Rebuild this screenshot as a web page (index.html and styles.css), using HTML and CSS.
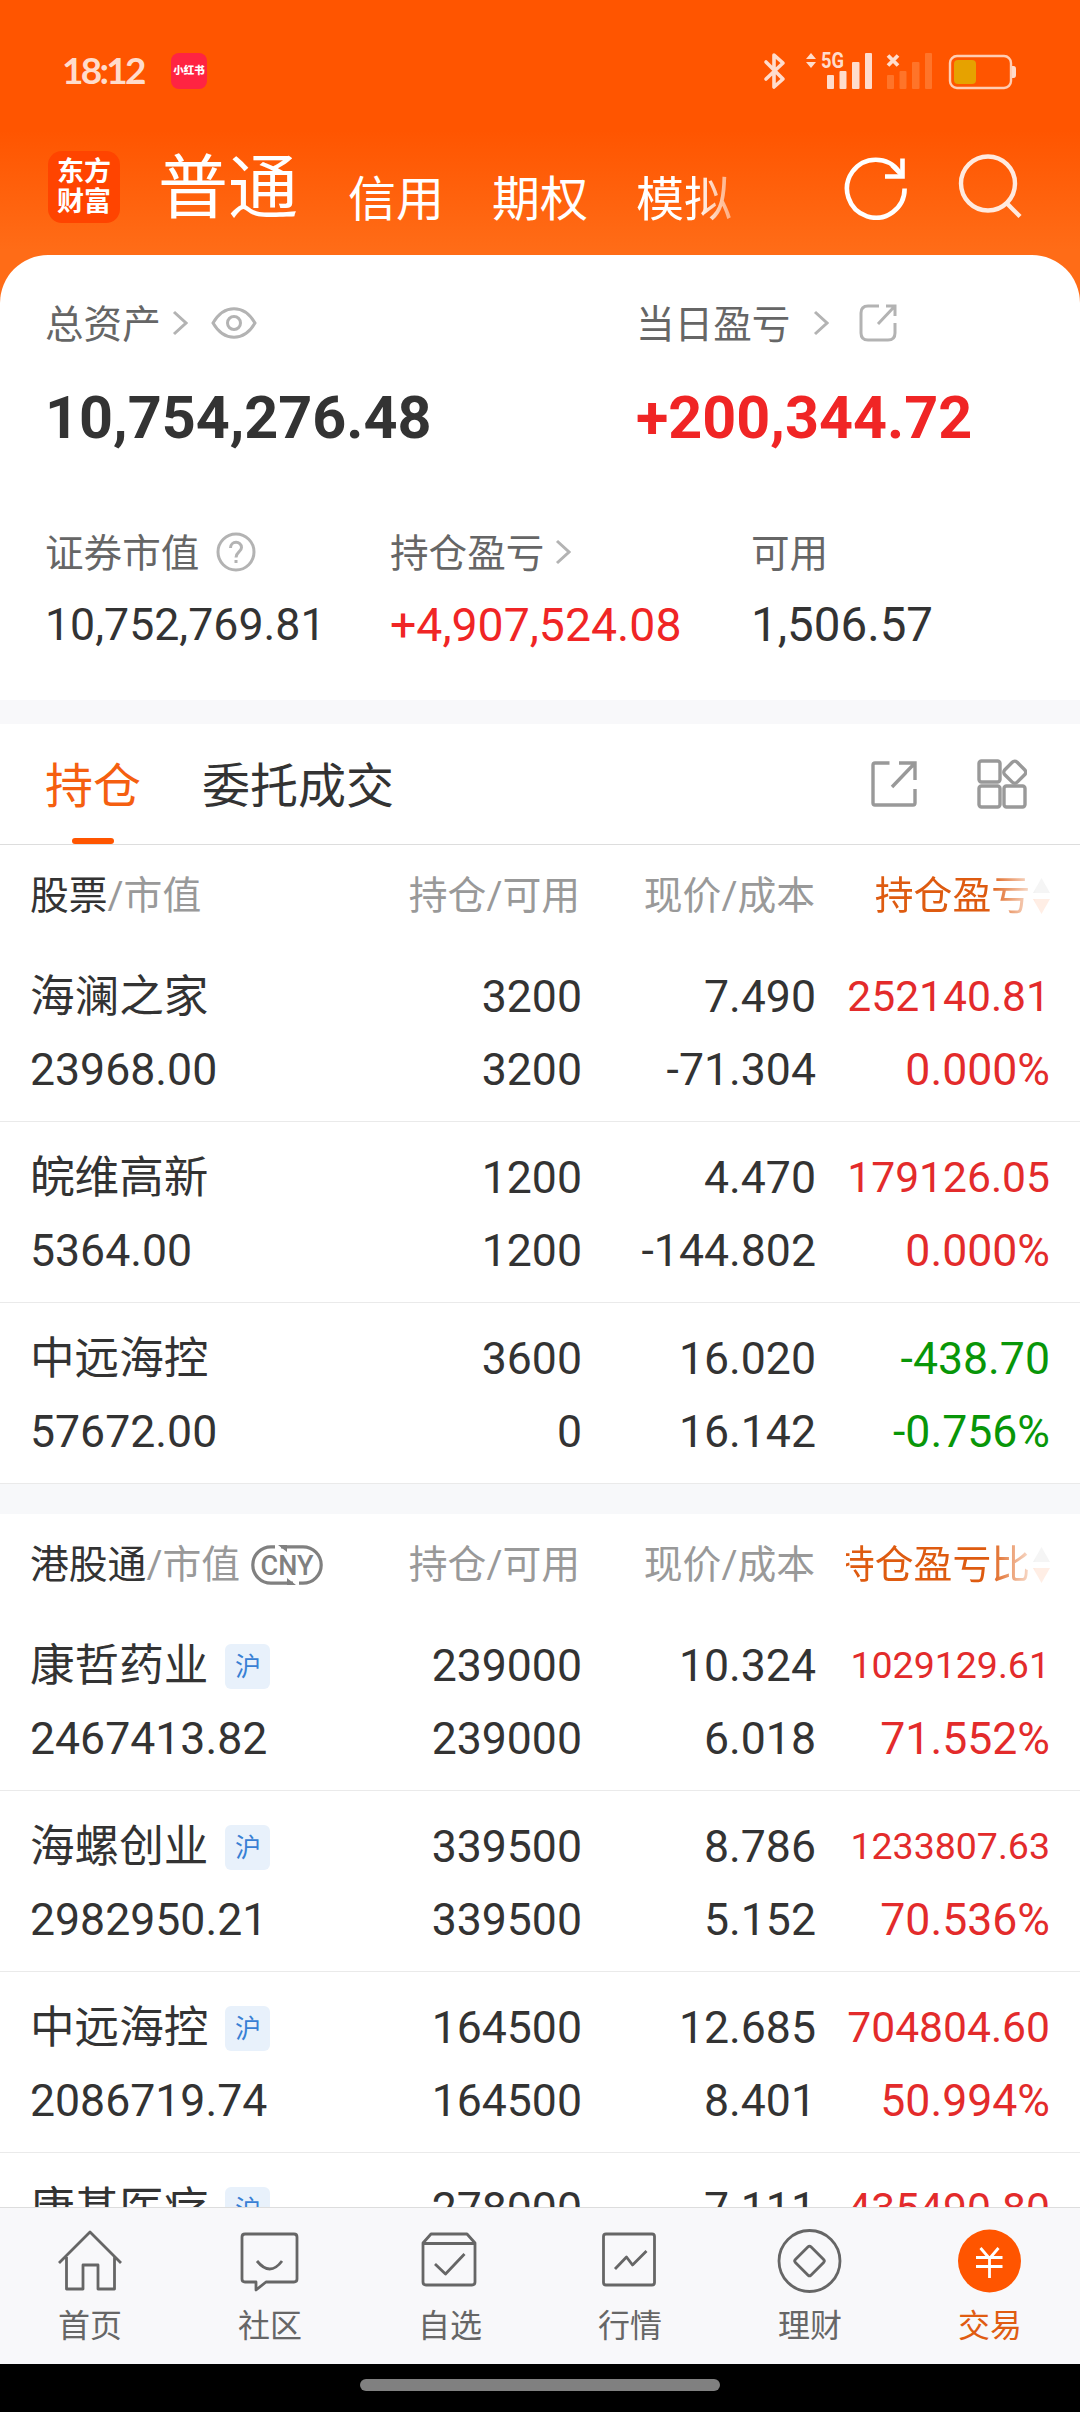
FILE: index.html
```html
<!DOCTYPE html>
<html lang="zh-CN">
<head>
    <meta charset="UTF-8">
    <meta name="viewport" content="width=device-width, initial-scale=1.0">
    <title>交易</title>
    <link rel="stylesheet" href="styles.css">
</head>
<body>
    <div class="top">
        <div class="status-bar">
            <span class="time">18:12</span>
            <span class="app-badge">小红书</span>
            <svg class="status-icons" width="256" height="44" viewBox="762 48 256 44">
                <path d="M766 61l17 17-9 8V54l9 8-17 16" fill="none" stroke="#ffdccc" stroke-width="3.6" stroke-linecap="round" stroke-linejoin="round"/>
                <path d="M806 58l5-6 5 6zM806 61l5 6 5-6z" fill="#ffdccc"/>
                <text x="821" y="67" class="net" textLength="23" lengthAdjust="spacingAndGlyphs">5G</text>
                <g fill="#ffdccc">
                    <rect x="827" y="74" width="7" height="14" rx="1"/>
                    <rect x="839.5" y="70" width="7" height="18" rx="1"/>
                    <rect x="852" y="61" width="7.500" height="27" rx="1"/>
                    <rect x="865" y="52" width="7" height="36" rx="1"/>
                </g>
                <path d="M888 54.500l10 10m0-10l-10 10" stroke="#ffdccc" stroke-width="3.800"/>
                <g fill="#ff7429">
                    <rect x="887" y="74" width="7" height="14" rx="1"/>
                    <rect x="899.5" y="70" width="7" height="18" rx="1"/>
                    <rect x="912" y="61" width="7.500" height="27" rx="1"/>
                    <rect x="925" y="52" width="7" height="36" rx="1"/>
                </g>
                <rect x="950" y="55" width="61" height="32" rx="7" fill="none" stroke="#ffcdb3" stroke-width="2.400"/>
                <rect x="954" y="59" width="22" height="24" rx="4" fill="#e6a200"/>
                <path d="M1012 65h1.500q2.500 0 2.500 3v6q0 3-2.500 3h-1.500z" fill="#ffdccc"/>
            </svg>
        </div>

        <div class="title-bar">
            <div class="logo">东方<br>财富</div>
            <div class="account-tabs">
                <span class="account active">普通</span>
                <span class="account">信用</span>
                <span class="account">期权</span>
                <span class="account faded">模拟</span>
            </div>
            <svg class="refresh" width="66" height="66" viewBox="0 0 66 66" fill="none" stroke="#fff" stroke-width="4.6">
                <path d="M61.600 34.500A28.800 29 0 1 1 56 17.500"/>
                <path d="M59.500 4.500V22.500H42"/>
                <path d="M49 11l10 10"/>
            </svg>
            <svg class="search" width="66" height="66" viewBox="0 0 66 66" fill="none" stroke="#ffeadf" stroke-width="4.400">
                <circle cx="31" cy="29.500" r="27"/>
                <path d="M49.500 49L63 62.500"/>
            </svg>
        </div>

        <div class="assets">
            <div class="asset-main">
                <div>
                    <div class="label">总资产
                        <svg class="chev" width="16" height="26" viewBox="0 0 16 26"><path d="M2 2l12 11L2 24"/></svg>
                        <svg class="eye" width="46" height="34" viewBox="0 0 46 34"><path d="M2 17C13-2 33-2 44 17 33 36 13 36 2 17z"/><circle cx="23" cy="17" r="6.500"/></svg>
                    </div>
                    <div class="big">10,754,276.48</div>
                </div>
                <div>
                    <div class="label">当日盈亏
                        <svg class="chev far" width="16" height="26" viewBox="0 0 16 26"><path d="M2 2l12 11L2 24"/></svg>
                        <svg class="share" width="38" height="38" viewBox="0 0 38 38"><path d="M20 2H9Q2 2 2 9V29Q2 36 9 36H29Q36 36 36 29V19M27 2H36V12M35 3L19 20"/></svg>
                    </div>
                    <div class="big red">+200,344.72</div>
                </div>
            </div>
            <div class="asset-sub">
                <div>
                    <div class="label">证券市值
                        <svg class="help" width="40" height="40" viewBox="0 0 40 40"><circle cx="20" cy="20" r="18"/><path d="M14.500 16C14.500 8.500 25.500 8.500 25.500 15.500C25.500 20 20 20 20 25.500M20 28v3"/></svg>
                    </div>
                    <div class="value small">10,752,769.81</div>
                </div>
                <div>
                    <div class="label">持仓盈亏
                        <svg class="chev near" width="16" height="26" viewBox="0 0 16 26"><path d="M2 2l12 11L2 24"/></svg>
                    </div>
                    <div class="value medium red">+4,907,524.08</div>
                </div>
                <div>
                    <div class="label">可用</div>
                    <div class="value">1,506.57</div>
                </div>
            </div>
        </div>
    </div>

    <div class="holdings">
        <div class="tabs">
            <div class="tab active">持仓</div>
            <div class="tab">委托成交</div>
            <svg class="tab-share" width="46" height="46" viewBox="0 0 46 46"><path d="M18.500 2H4Q2 2 2 4V42Q2 44 4 44H42Q44 44 44 42V28M28 2H44V19M43 3L21 26"/></svg>
            <svg class="tab-grid" width="50" height="50" viewBox="0 0 50 50"><rect x="2" y="2" width="21" height="21" rx="2.500"/><rect x="2" y="27" width="21" height="21" rx="2.500"/><rect x="27" y="27" width="21" height="21" rx="2.500"/><rect x="29" y="4.500" width="17.500" height="17.500" rx="3.500" transform="rotate(45 37.800 13.200)"/></svg>
        </div>

        <div class="table-head">
            <div class="name"><span class="dark">股票</span>/市值</div>
            <div>持仓/可用</div>
            <div>现价/成本</div>
            <div class="sort"><span>持仓盈亏</span><svg width="17" height="36" viewBox="0 0 17 36"><path d="M0 15L8.500 0 17 15z" fill="#999"/><path d="M0 21L8.500 36 17 21z" fill="#f50"/></svg></div>
        </div>
        <div class="row">
            <div class="name">海澜之家<br>23968.00</div>
            <div>3200<br>3200</div>
            <div>7.490<br>-71.304</div>
            <div class="up"><span class="fit">252140.81</span><br>0.000%</div>
        </div>
        <div class="row">
            <div class="name">皖维高新<br>5364.00</div>
            <div>1200<br>1200</div>
            <div>4.470<br>-144.802</div>
            <div class="up"><span class="fit">179126.05</span><br>0.000%</div>
        </div>
        <div class="row">
            <div class="name">中远海控<br>57672.00</div>
            <div>3600<br>0</div>
            <div>16.020<br>16.142</div>
            <div class="down">-438.70<br>-0.756%</div>
        </div>

        <div class="gap"></div>

        <div class="table-head">
            <div class="name"><span class="dark">港股通</span>/市值
                <svg class="cny" width="72" height="40" viewBox="0 0 72 40"><path d="M24 1.800H20A18 18 0 0 0 20 38.200H42M48 38.200H52A18 18 0 0 0 52 1.800H30"/><path class="tip" d="M27 0h9v7zM45 40h-9v-7z"/><text x="36" y="30" text-anchor="middle">CNY</text></svg>
            </div>
            <div>持仓/可用</div>
            <div>现价/成本</div>
            <div class="sort"><span>持仓盈亏比</span><svg width="17" height="36" viewBox="0 0 17 36"><path d="M0 15L8.500 0 17 15z" fill="#999"/><path d="M0 21L8.500 36 17 21z" fill="#f50"/></svg></div>
        </div>
        <div class="row">
            <div class="name">康哲药业<span class="market">沪</span><br>2467413.82</div>
            <div>239000<br>239000</div>
            <div>10.324<br>6.018</div>
            <div class="up"><span class="fit long">1029129.61</span><br>71.552%</div>
        </div>
        <div class="row">
            <div class="name">海螺创业<span class="market">沪</span><br>2982950.21</div>
            <div>339500<br>339500</div>
            <div>8.786<br>5.152</div>
            <div class="up"><span class="fit long">1233807.63</span><br>70.536%</div>
        </div>
        <div class="row">
            <div class="name">中远海控<span class="market">沪</span><br>2086719.74</div>
            <div>164500<br>164500</div>
            <div>12.685<br>8.401</div>
            <div class="up"><span class="fit">704804.60</span><br>50.994%</div>
        </div>
        <div class="row">
            <div class="name">康基医疗<span class="market">沪</span></div>
            <div>278000</div>
            <div>7.111</div>
            <div class="up"><span class="fit">435490.80</span></div>
        </div>
    </div>

    <div class="nav">
        <div class="nav-item">
            <svg width="66" height="66" viewBox="0 0 66 66"><path d="M2 36L33 5 64 36M9.500 30V62H26V38H41V62H57.500V30"/></svg>
            <span>首页</span>
        </div>
        <div class="nav-item">
            <svg width="66" height="66" viewBox="0 0 66 66"><path d="M8 7H57Q60 7 60 10V52Q60 55 57 55H29L19 63V55H8Q5 55 5 52V10Q5 7 8 7zM20 34Q33 50 45 34"/></svg>
            <span>社区</span>
        </div>
        <div class="nav-item">
            <svg width="66" height="66" viewBox="0 0 66 66"><path d="M6 16V55Q6 58 9 58H55Q58 58 58 55V16L50 7H14zM6 16.500H58M18 37L28.500 47 47.500 27"/></svg>
            <span>自选</span>
        </div>
        <div class="nav-item">
            <svg width="66" height="66" viewBox="0 0 66 66"><rect x="6.500" y="7" width="51" height="51" rx="2.500"/><path d="M18 42L29.500 30 35.500 38 49.500 24"/></svg>
            <span>行情</span>
        </div>
        <div class="nav-item">
            <svg width="66" height="66" viewBox="0 0 66 66"><circle cx="32.500" cy="34" r="30.500"/><rect x="21.500" y="23" width="22" height="22" rx="2" transform="rotate(45 32.500 34)"/></svg>
            <span>理财</span>
        </div>
        <div class="nav-item active">
            <svg width="66" height="66" viewBox="0 0 66 66"><circle class="coin" cx="32.500" cy="34" r="31.500"/><path class="yuan" d="M23.500 21L32.500 31.500 41.500 21M32.500 31V51M19 30.500H45.500M19 39.500H45.500"/></svg>
            <span>交易</span>
        </div>
    </div>
    <div class="home-bar"><div class="pill"></div></div>
</body>
</html>
```

FILE: styles.css
```css
* {
    box-sizing: border-box;
}

body {
    margin: 0;
    width: 1080px;
    height: 2412px;
    overflow: hidden;
    display: flex;
    flex-direction: column;
    background: #fff;
    color: #333;
    font-family: Roboto, "Noto Sans CJK SC", sans-serif;
}

svg {
    display: block;
    flex: none;
}

.top {
    flex: none;
    height: 700px;
    background: linear-gradient(#ff5500 130px, #ff6c17 250px, #ff6c17 310px);
}

.status-bar {
    display: flex;
    align-items: center;
    height: 141px;
    padding: 0 62px;
}

.time {
    width: 109px;
    padding-bottom: 2px;
    color: #ffdccc;
    font-family: Lato, sans-serif;
    font-size: 37px;
    font-weight: bold;
    letter-spacing: -2.7px;
}

.app-badge {
    width: 36px;
    height: 36px;
    margin-right: auto;
    border-radius: 8px;
    background: #ff2442;
    color: #fff;
    font-size: 10.5px;
    font-weight: 900;
    line-height: 35px;
    text-align: center;
}

.status-icons .net {
    fill: #ffdccc;
    font-size: 22px;
    font-weight: bold;
}

.title-bar {
    display: flex;
    align-items: center;
    height: 114px;
    padding: 0 57px 22px 48px;
    color: #fff;
}

.logo {
    width: 72px;
    height: 72px;
    padding-top: 6px;
    border-radius: 14px;
    background: #ff4400;
    font-size: 27px;
    font-weight: bold;
    line-height: 30px;
    text-align: center;
}

.account-tabs {
    display: flex;
    align-items: flex-end;
    gap: 48px;
    margin-left: 38px;
    padding-top: 4px;
    height: 74px;
}

.account {
    font-size: 48px;
    line-height: 48px;
}

.account.active {
    font-size: 70px;
    line-height: 70px;
    margin-right: 2px;
}

.account.faded {
    -webkit-mask-image: linear-gradient(90deg, #000 62%, rgba(0, 0, 0, 0.45));
    mask-image: linear-gradient(90deg, #000 62%, rgba(0, 0, 0, 0.45));
}

.refresh {
    margin-left: auto;
}

.search {
    margin-left: 48px;
}

.assets {
    height: 445px;
    padding: 33px 0 0 45px;
    border-radius: 48px 48px 0 0;
    background: #fff;
}

.asset-main {
    display: grid;
    grid-template-columns: 591px 1fr;
    margin-bottom: 69px;
}

.asset-sub {
    display: grid;
    grid-template-columns: 345px 361px 1fr;
}

.label {
    display: flex;
    align-items: center;
    height: 70px;
    padding-bottom: 5px;
    color: #666;
    font-size: 38.6px;
}

.label svg {
    margin-top: 4px;
    fill: none;
    stroke: #b3b3b3;
    stroke-width: 3;
}

.label .chev {
    margin-left: 11px;
}

.label .chev.far {
    margin-left: 23px;
}

.eye {
    margin-left: 23px;
}

.share {
    margin-left: 30px;
}

.help {
    margin-left: 17px;
}

.big {
    margin-top: 30px;
    font-size: 59.3px;
    font-weight: bold;
    line-height: 60px;
}

.value {
    margin-top: 8px;
    font-size: 47.5px;
    line-height: 60px;
}

.value.medium {
    font-size: 46.4px;
}

.value.small {
    font-size: 44.7px;
}

.red {
    color: #f02525;
}

.holdings {
    flex: 1;
    min-height: 0;
    overflow: hidden;
    border-top: 24px solid #f8f8fa;
}

.tabs {
    display: flex;
    align-items: center;
    height: 121px;
    padding: 0 53px 0 45px;
    border-bottom: 1px solid #ddd;
}

.tab {
    display: flex;
    flex-direction: column;
    align-items: center;
    height: 120px;
    margin-right: 61px;
    font-size: 48px;
    line-height: 126px;
}

.tab.active {
    color: #f55f10;
}

.tab.active::after {
    content: "";
    width: 42px;
    height: 6px;
    margin-top: -12px;
    border-radius: 3px;
    background: #ff5500;
}

.tab-share {
    margin-left: auto;
    margin-right: 60px;
}

.tabs svg {
    fill: none;
    stroke: #999;
    stroke-width: 3.4;
}

.table-head,
.row {
    display: grid;
    grid-template-columns: 350px 200px 235px 204px;
    padding-left: 30px;
    text-align: right;
}

.table-head {
    height: 96px;
    color: #999;
    font-size: 38.8px;
    line-height: 101px;
}

.table-head .name {
    display: flex;
    align-items: center;
}

.table-head .dark {
    color: #333;
}

.sort {
    display: flex;
    align-items: center;
    justify-content: flex-end;
    gap: 3px;
    margin-left: 31px;
    width: 204px;
    overflow: hidden;
    color: #de5b10;
    -webkit-mask-image: linear-gradient(90deg, #000 70%, rgba(0, 0, 0, 0.1) 93%);
    mask-image: linear-gradient(90deg, #000 70%, rgba(0, 0, 0, 0.1) 93%);
}

.sort span {
    white-space: nowrap;
}

.row {
    grid-template-columns: 350px 202px 234px 234px;
    height: 181px;
    padding-top: 20px;
    border-bottom: 1px solid #eaeaea;
    font-size: 44.6px;
    line-height: 73px;
}

.name {
    text-align: left;
}

.up {
    color: #e32b2b;
}

.down {
    color: #089608;
}

.fit {
    font-size: 42.6px;
    line-height: 1;
    vertical-align: 1px;
}

.fit.long {
    font-size: 37.5px;
    vertical-align: 3px;
}

.gap {
    height: 30px;
    background: #f7f8fa;
}

.cny {
    margin-left: 11px;
    fill: none;
    stroke: #808080;
    stroke-width: 3.2;
}

.cny .tip,
.cny text {
    fill: #808080;
    stroke: none;
}

.cny text {
    font-size: 27px;
    font-weight: 500;
}

.market {
    display: inline-block;
    width: 45px;
    height: 45px;
    margin-left: 17px;
    border-radius: 6px;
    background: #e8f1fb;
    color: #3880d4;
    font-size: 26px;
    line-height: 46px;
    text-align: center;
    vertical-align: 5px;
}

.nav {
    flex: none;
    display: grid;
    grid-template-columns: repeat(6, 1fr);
    height: 157px;
    border-top: 1px solid #ddd;
    background: #f8f8fa;
}

.nav-item {
    display: flex;
    flex-direction: column;
    align-items: center;
    padding-top: 19px;
    color: #666;
    font-size: 32px;
    line-height: 44px;
}

.nav-item svg {
    margin-bottom: 11px;
    fill: none;
    stroke: #666;
    stroke-width: 2.8;
    stroke-linejoin: round;
}

.nav-item.active {
    color: #e05c12;
}

.nav-item .coin {
    fill: #ff5500;
    stroke: none;
}

.nav-item .yuan {
    stroke: #fff;
}

.home-bar {
    flex: none;
    display: flex;
    justify-content: center;
    height: 48px;
    padding-top: 15px;
    background: #000;
}

.pill {
    width: 360px;
    height: 12px;
    border-radius: 6px;
    background: #808080;
}
```
